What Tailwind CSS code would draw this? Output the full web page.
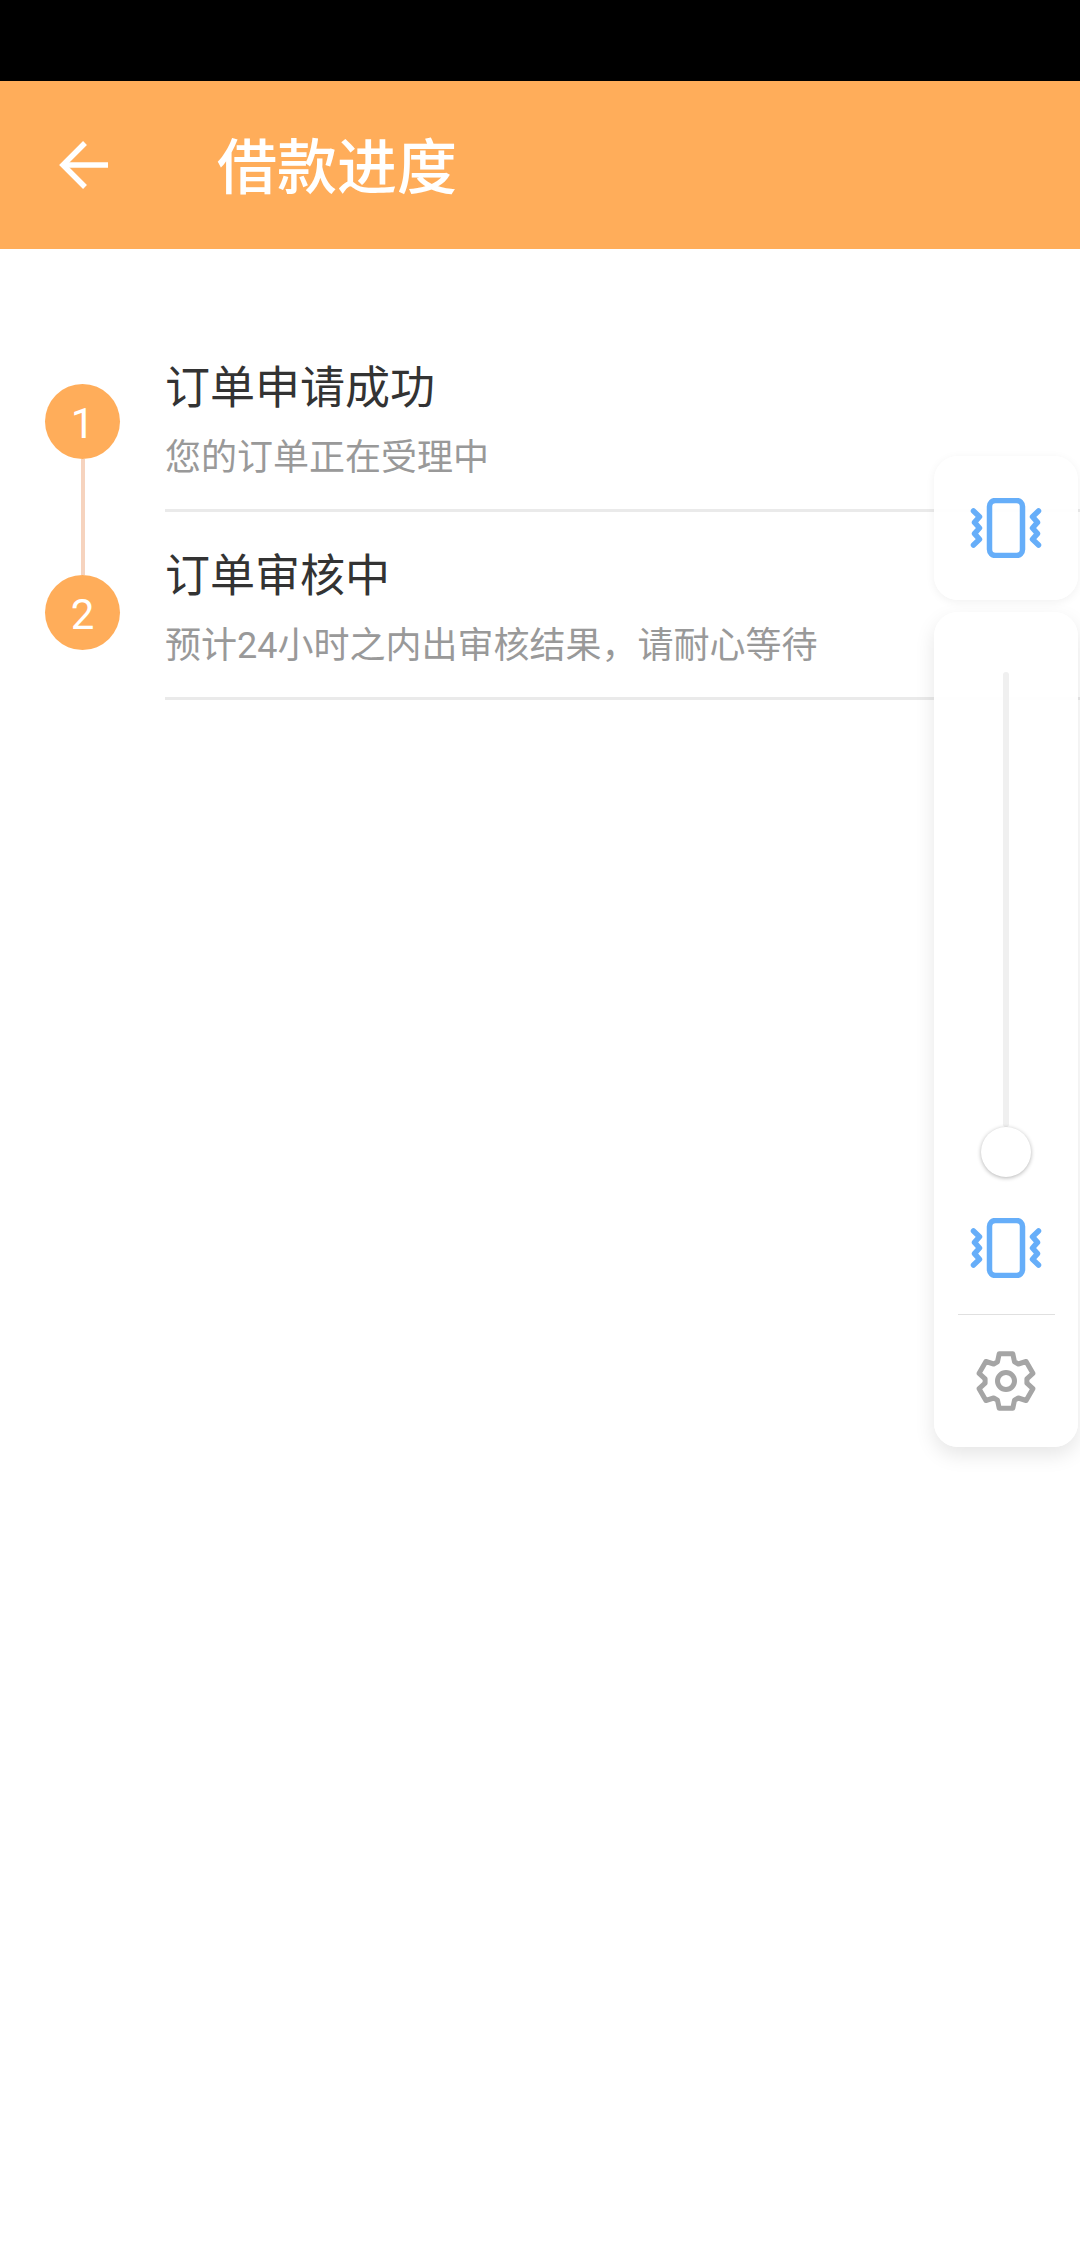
<!DOCTYPE html>
<html lang="en">

<head>
    <meta charset="UTF-8">
    <meta name="viewport" content="width=device-width, initial-scale=1.0">
    <title>借款进度</title>
    <script src="https://cdn.jsdelivr.net/npm/@tailwindcss/browser@4"></script>
</head>

<body class="bg-white">
    <div class="relative w-[1080px] h-[2244px] overflow-hidden bg-white font-['Roboto','Noto_Sans_CJK_SC',sans-serif]">
        <!-- Status bar -->
        <div class="h-[81px] bg-black"></div>

        <!-- Header -->
        <div class="h-[168px] bg-[#ffad5a] flex items-center">
            <svg class="ml-[58px] w-[52px] h-[52px]" viewBox="0 0 52 52" fill="none" stroke="#fff" stroke-width="5.5">
                <path d="M50 26H5" />
                <path d="M27 4L5 26l22 22" />
            </svg>
            <h1 class="ml-[107px] pt-[8px] text-[60px] leading-none font-medium text-white">借款进度</h1>
        </div>

        <!-- Progress list -->
        <div class="flex mt-[75px]">
            <div class="w-[165px] pt-[60px] flex flex-col items-center shrink-0">
                <div class="w-[75px] h-[75px] pt-[3px] rounded-full bg-[#ffad5a] text-white text-[42px] flex items-center justify-center">1</div>
                <div class="w-[4px] h-[116px] bg-[#f6d3be]"></div>
                <div class="w-[75px] h-[75px] pt-[3px] rounded-full bg-[#ffad5a] text-white text-[42px] flex items-center justify-center">2</div>
            </div>
            <div class="flex-1 min-w-0">
                <div class="h-[188px] border-b-[3px] border-[#eaeaea] pt-[37px]">
                    <p class="text-[45px] leading-[56px] text-[#333]">订单申请成功</p>
                    <p class="mt-[18px] text-[36px] leading-[46px] text-[#999]">您的订单正在受理中</p>
                </div>
                <div class="h-[188px] border-b-[3px] border-[#eaeaea] pt-[37px]">
                    <p class="text-[45px] leading-[56px] text-[#333]">订单审核中</p>
                    <p class="mt-[18px] text-[36px] leading-[46px] text-[#999]">预计24小时之内出审核结果，请耐心等待</p>
                </div>
            </div>
        </div>

        <!-- Floating volume panel -->
        <div class="absolute left-[934px] top-[456px] w-[144px] flex flex-col gap-[12px]">
            <div class="h-[144px] rounded-[24px] bg-white/95 shadow-[0_2px_10px_rgba(0,0,0,0.06)] flex items-center justify-center">
                <svg class="w-[72px] h-[60px]" viewBox="0 0 72 60" fill="none" stroke="#66aef9" stroke-width="5.5" stroke-linecap="round" stroke-linejoin="round">
                    <rect x="19.5" y="2.5" width="33" height="55" rx="6" />
                    <path d="M3.5 13l6 5.7-5 5.7 5 5.6-5 5.6 5 5.7-6 5.7" />
                    <path d="M68.5 13l-6 5.7 5 5.7-5 5.6 5 5.6-5 5.7 6 5.7" />
                </svg>
            </div>
            <div class="h-[835px] rounded-[24px] bg-white/95 shadow-[0_8px_20px_rgba(0,0,0,0.10)] flex flex-col items-center pt-[60px]">
                <div class="w-[6px] h-[455px] bg-[#f0f0f0] rounded-full"></div>
                <div class="w-[50px] h-[50px] rounded-full bg-white shadow-[0_1px_4px_rgba(0,0,0,0.3)]"></div>
                <svg class="mt-[41px] w-[72px] h-[60px]" viewBox="0 0 72 60" fill="none" stroke="#66aef9" stroke-width="5.5" stroke-linecap="round" stroke-linejoin="round">
                    <rect x="19.5" y="2.5" width="33" height="55" rx="6" />
                    <path d="M3.5 13l6 5.7-5 5.7 5 5.6-5 5.6 5 5.7-6 5.7" />
                    <path d="M68.5 13l-6 5.7 5 5.7-5 5.6 5 5.6-5 5.7 6 5.7" />
                </svg>
                <div class="mt-[36px] w-[97px] h-px bg-[#e0e0e0]"></div>
                <svg class="mt-[36px] w-[60px] h-[60px]" viewBox="0 0 60 60" fill="none" stroke="#a5a5a5" stroke-width="5" stroke-linejoin="round">
                    <path d="M23.2 2.8H36.8L38.5 10.8 42.3 13 50.1 10.5 56.9 22.3 50.9 27.8V32.2L56.9 37.7 50.1 49.5 42.3 47 38.5 49.2 36.8 57.2H23.2L21.5 49.2 17.7 47 9.9 49.5 3.1 37.7 9.1 32.2V27.8L3.1 22.3 9.9 10.5 17.7 13 21.5 10.8Z" />
                    <circle cx="30" cy="30" r="8.5" />
                </svg>
            </div>
        </div>
    </div>
</body>

</html>
